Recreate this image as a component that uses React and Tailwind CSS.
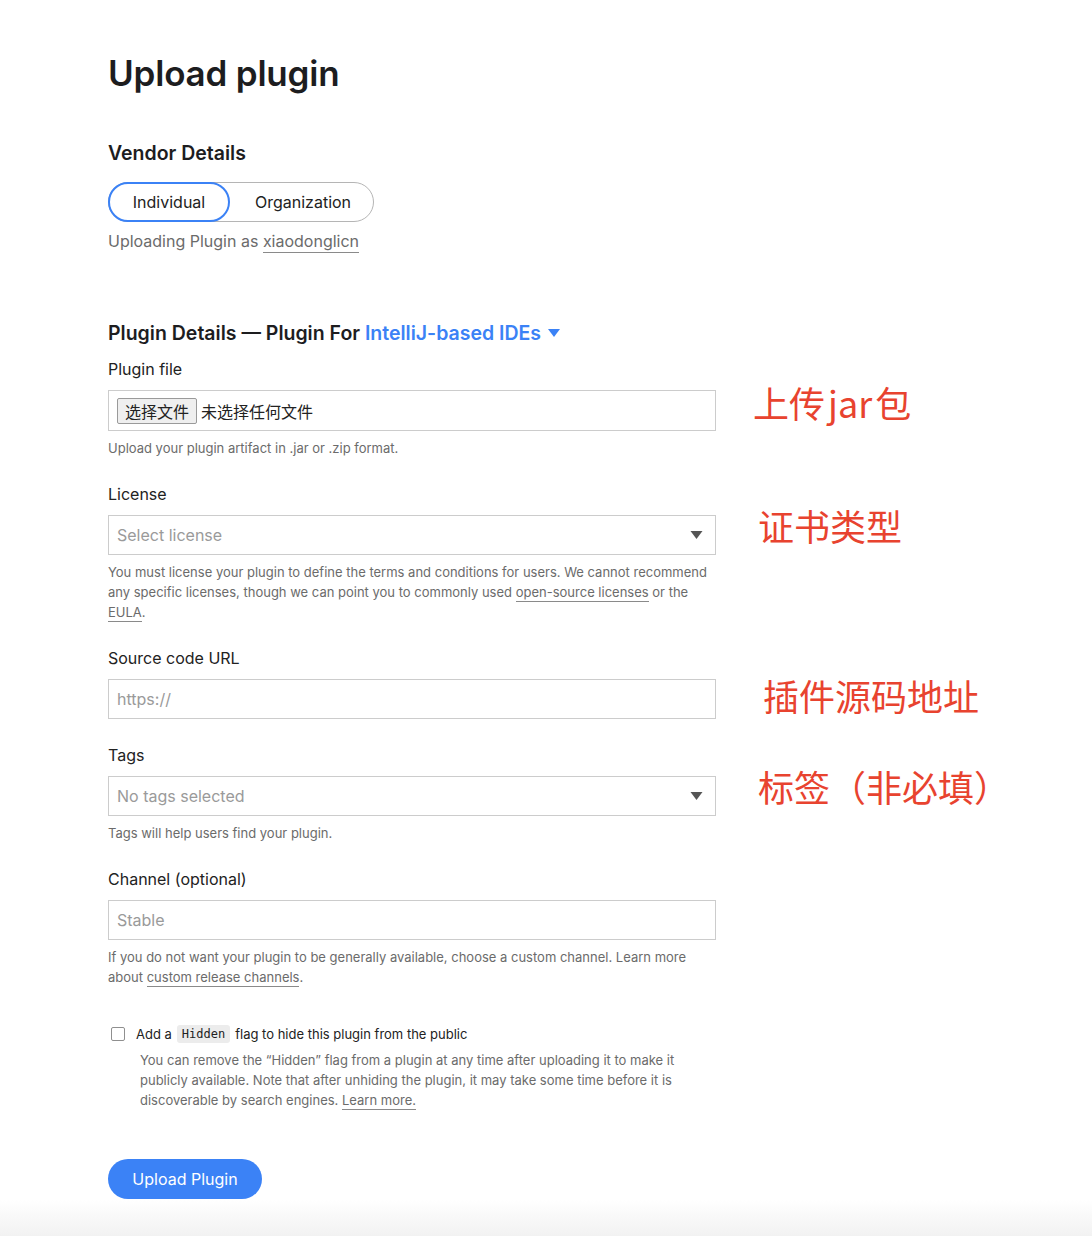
import React from 'react';

const Caret = ({ className = '' }) => (
  <svg viewBox="0 0 12 8" className={className} fill="currentColor">
    <path d="M0 0h12L6 8z" />
  </svg>
);

const Note = ({ children, className = '' }) => (
  <div className={`text-[36px] leading-none text-[#e8432f] whitespace-nowrap ${className}`} style={{ fontFamily: '"Noto Sans CJK SC", "Noto Sans", sans-serif' }}>
    {children}
  </div>
);

const Link = ({ children }) => (
  <span className="border-b border-[#8a8a8a] pb-[1px]">{children}</span>
);

const Field = ({ label, children, note, noteClass, help }) => (
  <div className="flex flex-col">
    <div className="text-[16px] leading-5 text-[#222]">{label}</div>
    <div className="flex items-center mt-[11px]">
      <div className="w-[608px] shrink-0">{children}</div>
      {note && <Note className={noteClass}>{note}</Note>}
    </div>
    {help && <div className="mt-[7px] w-[608px] text-[13px] leading-5 text-[#6b6b6b]">{help}</div>}
  </div>
);

const Box = ({ children }) => (
  <div className="h-10 border border-[#cccccc] bg-white flex items-center px-2 text-[16px] text-[#9a9a9a]">
    {children}
  </div>
);

const SelectBox = ({ children }) => (
  <div className="h-10 border border-[#cccccc] bg-white flex items-center justify-between pl-2 pr-3 text-[16px] text-[#9a9a9a]">
    <span>{children}</span>
    <Caret className="w-[13px] h-[8px] text-[#555]" />
  </div>
);

export default function App() {
  return (
    <div className="min-h-[1236px] bg-white flex flex-col" style={{ fontFamily: 'Inter, "Noto Sans", "Noto Sans CJK SC", sans-serif' }}>
      <div className="pl-[108px] pt-[52px] flex-1">
        <h1 className="text-[35px] leading-[42px] font-semibold text-[#1d1d1f] tracking-[-0.2px]">Upload plugin</h1>

        <h2 className="mt-[47px] text-[19.5px] leading-6 font-semibold text-[#1d1d1f]">Vendor Details</h2>
        <div className="mt-[17px] flex w-[266px] h-10 rounded-full border border-[#b5b5b5] text-[16px] text-[#222]">
          <div className="w-[122px] -m-px h-10 rounded-full border-2 border-[#3b82f6] flex items-center justify-center">Individual</div>
          <div className="flex-1 flex items-center justify-center pl-1">Organization</div>
        </div>
        <div className="mt-[9px] text-[16px] leading-5 text-[#6b6b6b]">
          Uploading Plugin as <Link>xiaodonglicn</Link>
        </div>

        <h2 className="mt-[70px] text-[19.5px] leading-6 font-semibold text-[#1d1d1f] flex items-center">
          Plugin Details — Plugin For&nbsp;<span className="text-[#3b82f6]">IntelliJ-based IDEs</span>
          <Caret className="ml-[7px] w-[12px] h-[8px] text-[#3b82f6]" />
        </h2>

        <div className="mt-[14px] flex flex-col gap-[26px]">
          <Field
            label="Plugin file"
            note={<>上传<span className="mx-[3px]">jar</span>包</>}
            noteClass="ml-[37px] -mt-[18px]"
            help="Upload your plugin artifact in .jar or .zip format."
          >
            <div className="h-[41px] border border-[#cccccc] bg-white flex items-center px-2 text-[16px] text-[#222]" style={{ fontFamily: '"Noto Sans CJK SC", sans-serif' }}>
              <span className="h-[26px] mt-[1px] px-[7px] flex items-center border border-[#9a9a9a] rounded-[2px] bg-[#efefef] leading-none">选择文件</span>
              <span className="ml-[4px] leading-none">未选择任何文件</span>
            </div>
          </Field>

          <Field
            label="License"
            note="证书类型"
            noteClass="ml-[42px] -mt-[20px]"
            help={<>You must license your plugin to define the terms and conditions for users. We cannot recommend any specific licenses, though we can point you to commonly used <Link>open-source licenses</Link> or the <Link>EULA</Link>.</>}
          >
            <SelectBox>Select license</SelectBox>
          </Field>

          <Field label="Source code URL" note="插件源码地址" noteClass="ml-[47px] -mt-[8px]">
            <Box>https://</Box>
          </Field>

          <Field
            label="Tags"
            note="标签（非必填）"
            noteClass="ml-[42px] -mt-[20px]"
            help="Tags will help users find your plugin."
          >
            <SelectBox>No tags selected</SelectBox>
          </Field>

          <Field
            label="Channel (optional)"
            help={<>If you do not want your plugin to be generally available, choose a custom channel. Learn more about <Link>custom release channels</Link>.</>}
          >
            <Box>Stable</Box>
          </Field>
        </div>

        <div className="mt-[37px] w-[608px]">
          <div className="flex items-center text-[13px] leading-5 text-[#222]">
            <span className="ml-[3px] w-[14px] h-[14px] border border-[#8f8f8f] rounded-[2px] bg-white" />
            <span className="ml-[11px]">Add a</span>
            <span className="mx-[5px] px-[5px] rounded-[3px] bg-[#ececec] text-[12px] leading-[18px]" style={{ fontFamily: '"DejaVu Sans Mono", monospace' }}>Hidden</span>
            <span>flag to hide this plugin from the public</span>
          </div>
          <div className="mt-[6px] pl-[32px] pr-[30px] text-[13px] leading-5 text-[#6b6b6b]">
            You can remove the “Hidden” flag from a plugin at any time after uploading it to make it publicly available. Note that after unhiding the plugin, it may take some time before it is discoverable by search engines. <Link>Learn more.</Link>
          </div>
        </div>

        <button className="mt-[49px] h-10 w-[154px] rounded-full bg-[#3b82f6] text-white text-[16px] flex items-center justify-center">
          Upload Plugin
        </button>
      </div>
      <div className="h-[36px] bg-gradient-to-b from-white to-[#f2f2f2]" />
    </div>
  );
}
